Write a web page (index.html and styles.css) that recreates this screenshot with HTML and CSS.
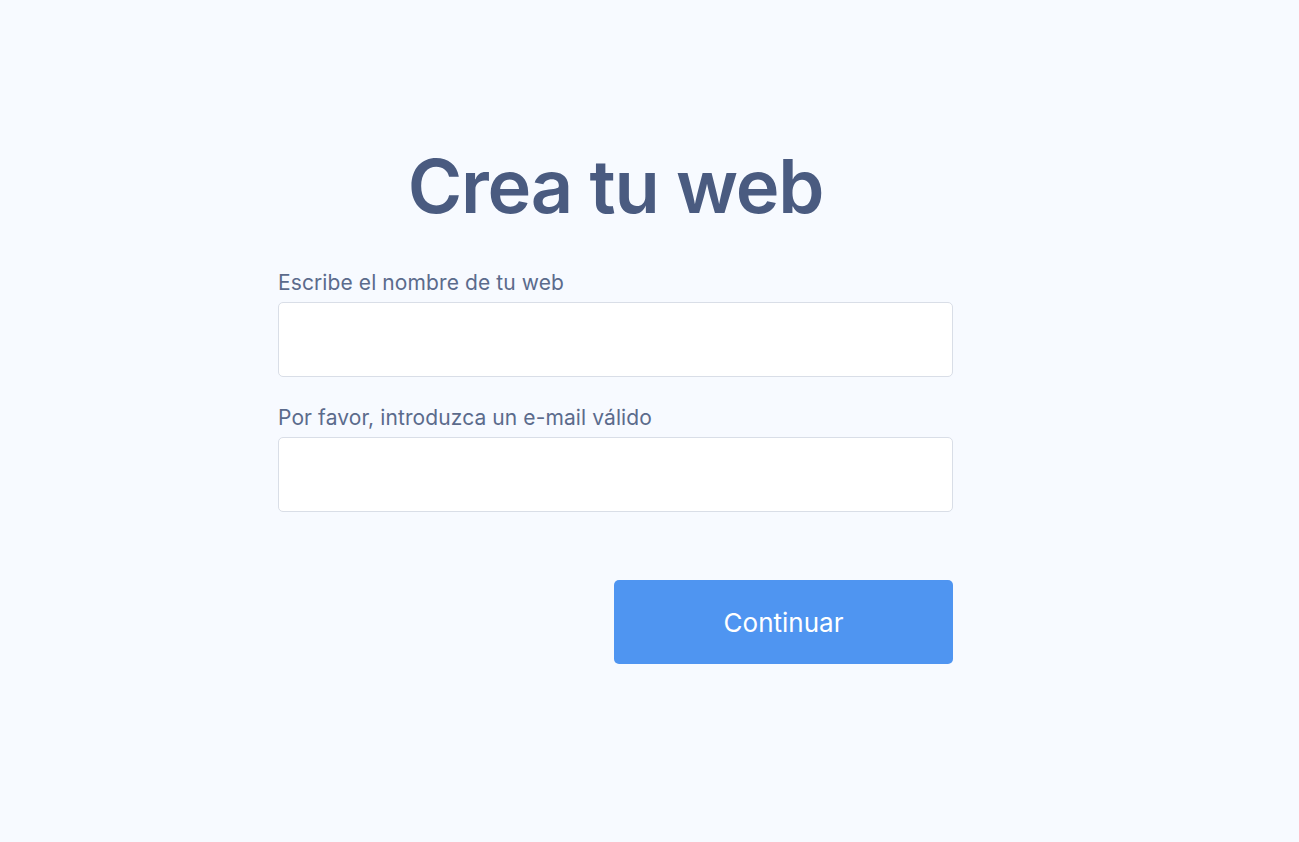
FILE: index.html
```html
<!DOCTYPE html>
<html lang="es">
<head>
    <meta charset="UTF-8">
    <meta name="viewport" content="width=device-width, initial-scale=1.0">
    <title>Crea tu web</title>
    <link rel="stylesheet" href="styles.css">
</head>
<body>
    <div class="form-container">
        <h1 class="form-header">Crea tu web</h1>
        <form class="signup-form">
            <label class="field-label" for="sitename">Escribe el nombre de tu web</label>
            <input type="text" id="sitename" name="sitename">
            <label class="field-label" for="email">Por favor, introduzca un e-mail válido</label>
            <input type="email" id="email" name="email">
            <div class="button-row">
                <button type="submit">Continuar</button>
            </div>
        </form>
    </div>
</body>
</html>
```

FILE: styles.css
```css
body {
    margin: 0;
    min-height: 100vh;
    background-color: #f7faff;
    font-family: 'Inter', 'Liberation Sans', sans-serif;
    display: flex;
    justify-content: center;
}

.form-container {
    width: 675px;
    margin-right: 68px;
    padding-top: 141px;
}

.form-header {
    margin: 0 0 40px 0;
    text-align: center;
    font-size: 74px;
    font-weight: 600;
    line-height: 90px;
    color: #4a5b80;
    letter-spacing: -1.2px;
}

.signup-form {
    display: flex;
    flex-direction: column;
}

.field-label {
    font-size: 21px;
    line-height: 24px;
    color: #5b6b8c;
    letter-spacing: 0.1px;
    margin-bottom: 7px;
}

input {
    height: 75px;
    border: 1px solid #d9dee7;
    border-radius: 5px;
    background-color: #ffffff;
    box-sizing: border-box;
    margin: 0 0 29px 0;
    font-size: 20px;
    padding: 0 16px;
}

input:focus {
    outline: none;
    border-color: #4f95f0;
}

.button-row {
    display: flex;
    justify-content: flex-end;
    margin-top: 39px;
}

button {
    width: 339px;
    height: 84px;
    border: none;
    border-radius: 5px;
    background-color: #4f95f1;
    color: #ffffff;
    font-family: 'Inter', 'Liberation Sans', sans-serif;
    font-size: 26px;
    cursor: pointer;
}
```
